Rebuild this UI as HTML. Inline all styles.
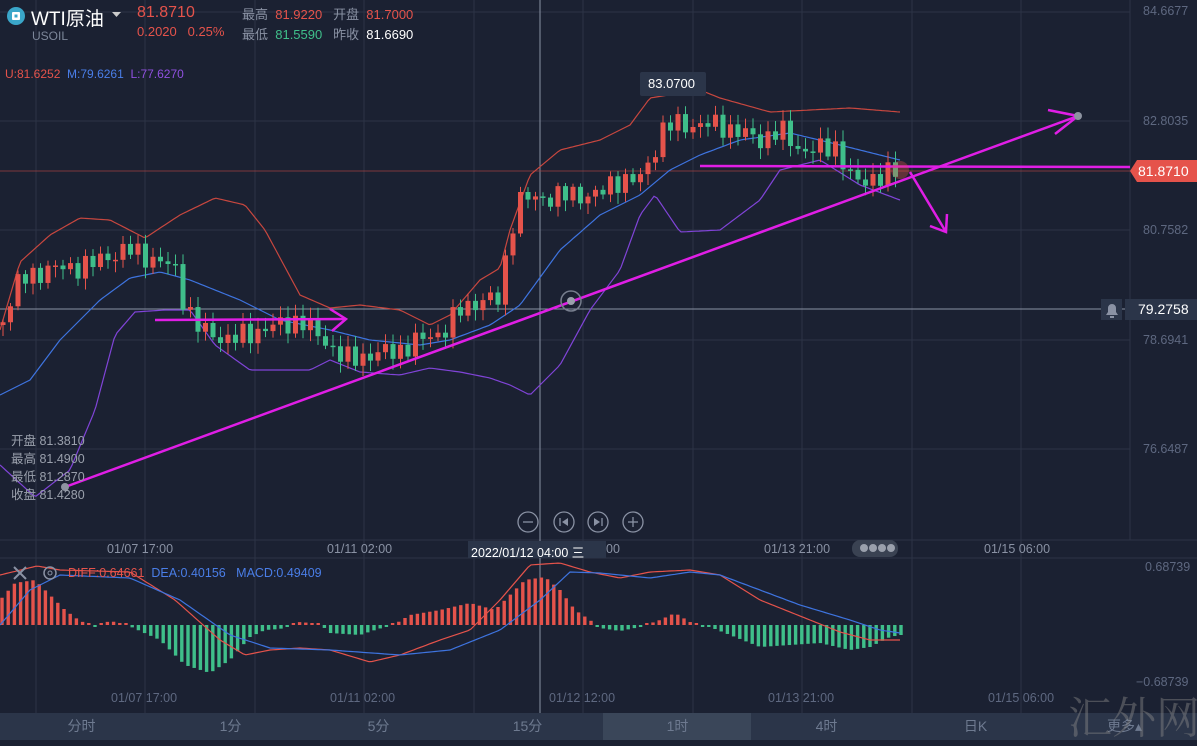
<!DOCTYPE html><html><head><meta charset="utf-8"><style>
body{margin:0;width:1197px;height:740px;overflow:hidden;background:#1b2132;font-family:"Liberation Sans","Noto Sans CJK SC",sans-serif;position:relative}
.t{position:absolute;white-space:nowrap}
.ax{color:#5e6880;font-size:12.5px}
.tab{position:absolute;top:713px;height:27px;line-height:27px;text-align:center;color:#6e7a90;font-size:14px;width:149px}
</style></head><body>
<svg id="s" width="1197" height="740" style="position:absolute;left:0;top:0">
<g stroke="#2c3446" stroke-width="1">
<line x1="0" y1="12" x2="1130" y2="12"/><line x1="0" y1="121" x2="1130" y2="121"/><line x1="0" y1="230" x2="1130" y2="230"/><line x1="0" y1="340" x2="1130" y2="340"/><line x1="0" y1="449" x2="1130" y2="449"/>
<line x1="0" y1="540" x2="1197" y2="540"/><line x1="0" y1="558" x2="1197" y2="558"/>
<line x1="1130" y1="0" x2="1130" y2="540"/>
</g>
<g id="vg" stroke="#2c3446"></g>
<line x1="540" y1="0" x2="540" y2="713" stroke="#8a92a4" stroke-width="1"/>
<line x1="0" y1="309" x2="1125" y2="309" stroke="#8a92a4" stroke-width="1"/>
<line x1="0" y1="171" x2="1130" y2="171" stroke="#a04040" stroke-width="0.8"/>
<g id="c"></g>
<g id="m"></g>
<g stroke="#e01ee6" stroke-width="2.5" fill="none">
<line x1="65" y1="487" x2="1078" y2="116"/>
<polyline points="1048,110 1078,116 1055,134"/>
<line x1="700" y1="166" x2="1130" y2="167"/>
<line x1="910" y1="172" x2="946" y2="232"/>
<polyline points="930,226 946,232 947,214"/>
<line x1="155" y1="320" x2="346" y2="319"/>
<polyline points="330,309 346,319 332,331"/>
</g>
<circle cx="1078" cy="116" r="4" fill="#8d93a0"/>
<circle cx="65" cy="487" r="4" fill="#8d93a0"/>
<circle cx="571" cy="301" r="10" fill="none" stroke="#777e8e" stroke-width="1.5"/><circle cx="571" cy="301" r="4" fill="#9aa0ac"/>
<circle cx="900" cy="170" r="9" fill="#e5534b" opacity=".35"/>
<g fill="none" stroke="#8a92a4" stroke-width="1.3">
<circle cx="528" cy="522" r="10"/><circle cx="564" cy="522" r="10"/><circle cx="598" cy="522" r="10"/><circle cx="633" cy="522" r="10"/>
<line x1="523" y1="522" x2="533" y2="522"/><line x1="628" y1="522" x2="638" y2="522"/><line x1="633" y1="517" x2="633" y2="527"/>
<line x1="560" y1="518" x2="560" y2="526"/><line x1="602" y1="518" x2="602" y2="526"/>
</g>
<path d="M568 518 L562 522 L568 526Z M594 518 L600 522 L594 526Z" fill="#8a92a4"/>
<path d="M1130 171 L1137 160 H1197 V182 H1137Z" fill="#e5534b"/>
<rect x="1125" y="299" width="72" height="21" fill="#2b3549"/>
<rect x="1101" y="299" width="21" height="21" fill="#2b3549"/>
<path d="M1106 315 h12 l-2-3 v-4 a4 4 0 0 0 -8 0 v4z M1110 316 h4 v2 h-4z" fill="#8a92a4"/>
<rect x="640" y="72" width="66" height="24" rx="2" fill="#2b3549"/>
<rect x="468" y="541" width="138" height="17" fill="#2b3549"/>
<rect x="852" y="540" width="46" height="17" rx="8" fill="#3a4252"/>
<circle cx="864" cy="548" r="4" fill="#9aa0ac"/><circle cx="873" cy="548" r="4" fill="#9aa0ac"/><circle cx="882" cy="548" r="4" fill="#9aa0ac"/><circle cx="891" cy="548" r="4" fill="#9aa0ac"/>
<circle cx="16" cy="16" r="9" fill="#3aa6c9"/><rect x="12" y="12" width="8" height="8" rx="1" fill="#fff"/><rect x="14.5" y="14.5" width="3" height="3" fill="#3aa6c9"/>
<path d="M112 12 h9 l-4.5 5z" fill="#ccc"/>
<path d="M14 567 l12 12 M26 567 l-12 12" stroke="#8a92a4" stroke-width="2"/>
<circle cx="50" cy="573" r="6" fill="none" stroke="#8a92a4" stroke-width="1.5"/><circle cx="50" cy="573" r="2" fill="none" stroke="#8a92a4"/>
<rect x="0" y="713" width="1197" height="27" fill="#2b3549"/>
<rect x="603" y="713" width="148" height="27" fill="#3a4659"/>
</svg>
<div class="t" style="left:31px;top:4px;color:#fff;font-size:19px">WTI原油</div>
<div class="t" style="left:32px;top:29px;color:#7d879a;font-size:12px">USOIL</div>
<div class="t" style="left:137px;top:4px;color:#e5534b;font-size:16px">81.8710</div>
<div class="t" style="left:137px;top:24px;color:#e5534b;font-size:13px">0.2020&nbsp;&nbsp;&nbsp;0.25%</div>
<div class="t" style="left:242px;top:4px;font-size:13px;color:#8a92a4">最高 <span style="color:#e5534b">&nbsp;81.9220</span>&nbsp;&nbsp; 开盘 <span style="color:#e5534b">&nbsp;81.7000</span></div>
<div class="t" style="left:242px;top:24px;font-size:13px;color:#8a92a4">最低 <span style="color:#3fbf8a">&nbsp;81.5590</span>&nbsp;&nbsp; 昨收 <span style="color:#fff">&nbsp;81.6690</span></div>
<div class="t" style="left:5px;top:67px;font-size:12px;color:#e5534b">U:81.6252 <span style="color:#4a7ee8">&nbsp;M:79.6261</span> <span style="color:#9050e0">&nbsp;L:77.6270</span></div>
<div class="t" style="left:11px;top:432px;font-size:12.5px;color:#9aa0ac;line-height:18px">开盘 81.3810<br>最高 81.4900<br>最低 81.2870<br>收盘 81.4280</div>
<div class="t" style="left:648px;top:76px;font-size:13px;color:#fff">83.0700</div>
<div class="t ax" style="left:1143px;top:4px">84.6677</div>
<div class="t ax" style="left:1143px;top:114px">82.8035</div>
<div class="t" style="left:1138px;top:163px;color:#fff;font-size:14px">81.8710</div>
<div class="t ax" style="left:1143px;top:223px">80.7582</div>
<div class="t" style="left:1138px;top:301px;color:#fff;font-size:14px">79.2758</div>
<div class="t ax" style="left:1143px;top:333px">78.6941</div>
<div class="t ax" style="left:1143px;top:442px">76.6487</div>
<div class="t ax" style="left:107px;top:542px;color:#8a92a4">01/07 17:00</div>
<div class="t ax" style="left:327px;top:542px;color:#8a92a4">01/11 02:00</div>
<div class="t" style="left:471px;top:542px;color:#fff;font-size:12.5px">2022/01/12 04:00 三</div>
<div class="t ax" style="left:606px;top:542px;color:#8a92a4">00</div>
<div class="t ax" style="left:764px;top:542px;color:#8a92a4">01/13 21:00</div>
<div class="t ax" style="left:984px;top:542px;color:#8a92a4">01/15 06:00</div>
<div class="t" style="left:68px;top:566px;font-size:12.5px;color:#e5534b">DIFF:0.64661 <span style="color:#4a7ee8">&nbsp;DEA:0.40156&nbsp;&nbsp; MACD:0.49409</span></div>
<div class="t ax" style="left:1145px;top:560px">0.68739</div>
<div class="t ax" style="left:1136px;top:675px">−0.68739</div>
<div class="t ax" style="left:111px;top:691px">01/07 17:00</div>
<div class="t ax" style="left:330px;top:691px">01/11 02:00</div>
<div class="t ax" style="left:549px;top:691px">01/12 12:00</div>
<div class="t ax" style="left:768px;top:691px">01/13 21:00</div>
<div class="t ax" style="left:988px;top:691px">01/15 06:00</div>
<div class="tab" style="left:7px">分时</div><div class="tab" style="left:156px">1分</div><div class="tab" style="left:304px">5分</div><div class="tab" style="left:453px">15分</div><div class="tab" style="left:603px">1时</div><div class="tab" style="left:752px">4时</div><div class="tab" style="left:901px">日K</div><div class="tab" style="left:1050px">更多▴</div>
<div class="t" style="left:1068px;top:682px;font-size:44px;color:#888;opacity:.45;font-family:'Noto Serif CJK SC',serif">汇外网</div>
<script>
var NS="http://www.w3.org/2000/svg";
function el(p,t,a){var e=document.createElementNS(NS,t);for(var k in a)e.setAttribute(k,a[k]);p.appendChild(e);return e;}
function ip(P,x){if(x<=P[0][0])return P[0][1];for(var i=1;i<P.length;i++){if(x<=P[i][0]){var a=P[i-1],b=P[i];return a[1]+(b[1]-a[1])*(x-a[0])/(b[0]-a[0]);}}return P[P.length-1][1];}
var vg=document.getElementById('vg');
[36,145,255,364,474,583,693,802,912,1021].forEach(function(x){el(vg,'line',{x1:x,y1:0,x2:x,y2:713});});
function line(g,P,col,x0,x1){var d='';for(var x=x0;x<=x1;x+=3){d+=(d?'L':'M')+x+' '+ip(P,x).toFixed(1);}el(g,'path',{d:d,stroke:col,fill:'none','stroke-width':1.2});}
var g=document.getElementById('c');
var U=[[0,330],[20,262],[50,235],[80,218],[110,220],[145,238],[180,215],[215,198],[245,205],[265,230],[300,295],[330,308],[360,305],[400,310],[430,325],[450,315],[480,280],[500,268],[510,230],[530,175],[560,150],[600,140],[630,125],[650,98],[700,90],[720,98],[770,112],[850,108],[900,112]];
var M=[[0,395],[30,380],[60,340],[100,300],[130,278],[160,272],[190,280],[240,300],[280,320],[330,330],[370,340],[420,345],[450,340],[490,325],[520,305],[560,250],[600,215],[640,195],[670,170],[700,155],[740,140],[790,133],[840,145],[900,160]];
var L=[[0,465],[35,497],[70,470],[95,410],[115,335],[135,312],[165,310],[190,310],[215,345],[250,370],[280,370],[310,370],[330,360],[360,372],[400,375],[430,368],[460,372],[490,378],[510,385],[530,395],[560,365],[590,310],[620,270],[640,215],[655,195],[680,232],[720,230],[760,200],[780,170],[820,160],[860,185],[900,200]];
line(g,U,'#c8473f',0,900);line(g,M,'#3e74e0',0,900);line(g,L,'#8044d8',0,900);
var C=[[0,325],[20,280],[45,270],[90,265],[110,255],[130,250],[160,262],[175,268],[185,305],[200,330],[230,340],[260,330],[300,320],[330,345],[345,360],[370,355],[400,350],[420,340],[445,330],[460,310],[480,300],[500,300],[510,230],[520,200],[540,198],[570,195],[600,195],[615,180],[640,180],[650,160],[665,125],[690,125],[720,125],[760,140],[780,130],[800,150],[820,150],[835,145],[845,165],[855,185],[870,178],[900,172]];
var prev=ip(C,0);
for(var i=0;i<120;i++){var x=3+i*7.5;if(x>903)break;var c=ip(C,x)+Math.sin(i*2.7)*9+Math.cos(i*1.3)*4;var o=prev;prev=c;
var up=c<o;var col=up?'#e5534b':'#3fbf8a';var t=Math.min(o,c),b=Math.max(o,c);if(b-t<1.5)b=t+1.5;
var hi=t-3-Math.abs(Math.sin(i*3.1))*8,lo=b+3+Math.abs(Math.cos(i*2.3))*8;
el(g,'line',{x1:x,y1:hi,x2:x,y2:lo,stroke:col,'stroke-width':1});el(g,'rect',{x:x-2.5,y:t,width:5,height:b-t,fill:col});}
var m=document.getElementById('m');
var H=[[0,25],[15,42],[35,45],[50,30],[65,15],[80,4],[95,-1],[110,4],[125,1],[140,-6],[160,-15],[185,-40],[210,-48],[230,-35],[250,-12],[265,-5],[280,-4],[300,3],[320,1],[330,-8],[360,-10],[375,-5],[395,1],[410,10],[440,15],[470,22],[495,15],[510,30],[525,45],[545,48],[560,35],[575,15],[590,5],[600,-3],[620,-6],[640,-2],[660,5],[675,12],[690,3],[710,-2],[730,-10],[760,-22],[790,-20],[820,-18],[850,-25],[870,-22],[890,-12],[900,-10]];
for(var x=2;x<=902;x+=6.2){var v=ip(H,x);if(Math.abs(v)<2)v=v<0?-2:2;el(m,'rect',{x:x-1.7,y:v>0?625-v:625,width:3.4,height:Math.abs(v),fill:v>0?'#e5534b':'#3fbf8a'});}
line(m,[[0,575],[37,566],[60,570],[130,572],[175,600],[220,640],[245,655],[270,650],[300,648],[330,650],[370,662],[400,655],[440,640],[470,630],[500,600],[530,565],[560,563],[590,572],[620,578],[650,572],[690,570],[720,575],[760,600],[790,612],[810,620],[840,632],[870,640],[900,640]],'#e5534b',0,900);
line(m,[[0,625],[30,590],[60,575],[130,578],[180,600],[230,635],[270,648],[330,650],[400,655],[450,650],[500,630],[540,600],[570,572],[600,573],[650,578],[690,572],[720,575],[760,590],[800,605],[850,620],[880,630],[900,633]],'#3e74e0',0,900);
</script>
</body></html>
